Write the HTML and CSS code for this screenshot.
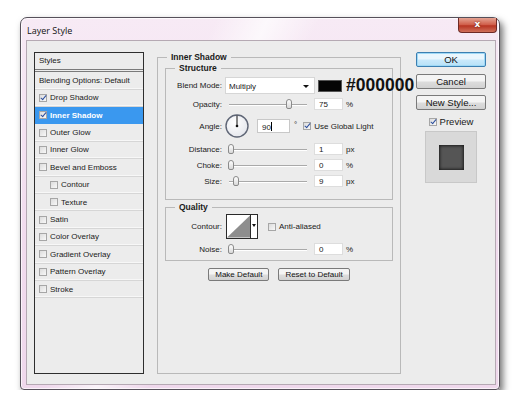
FILE: index.html
```html
<!DOCTYPE html>
<html lang="en">
<head>
  <meta charset="UTF-8">
  <title>Layer Style</title>
  <link rel="stylesheet" href="styles.css">
</head>
<body>
  <div class="desktop">
    <div class="window">
      <div class="titlebar">
        <span class="title">Layer Style</span>
        <span class="close">x</span>
      </div>

      <div class="client">
        <ul class="style-list">
          <li class="head">Styles</li>
          <li class="blend">Blending Options: Default</li>
          <li><span class="cb on"></span>Drop Shadow</li>
          <li class="selected"><span class="cb on"></span>Inner Shadow</li>
          <li><span class="cb"></span>Outer Glow</li>
          <li><span class="cb"></span>Inner Glow</li>
          <li><span class="cb"></span>Bevel and Emboss</li>
          <li class="sub-item"><span class="cb"></span>Contour</li>
          <li class="sub-item"><span class="cb"></span>Texture</li>
          <li><span class="cb"></span>Satin</li>
          <li><span class="cb"></span>Color Overlay</li>
          <li><span class="cb"></span>Gradient Overlay</li>
          <li><span class="cb"></span>Pattern Overlay</li>
          <li><span class="cb"></span>Stroke</li>
          <li class="filler"></li>
        </ul>

        <fieldset class="group">
          <legend>Inner Shadow</legend>

          <fieldset class="sub structure">
            <legend>Structure</legend>

            <div class="row">
              <span class="lbl">Blend Mode:</span>
              <div class="select">Multiply<span class="arrow"></span></div>
              <span class="swatch"></span>
              <span class="hex">#000000</span>
            </div>

            <div class="row tight">
              <span class="lbl">Opacity:</span>
              <div class="slider"><span class="thumb" style="left: 74%"></span></div>
              <span class="num">75</span>
              <span class="unit">%</span>
            </div>

            <div class="row angle">
              <span class="lbl">Angle:</span>
              <svg class="dial" width="24" height="24" viewBox="0 0 24 24">
                <defs>
                  <radialGradient id="dialFill" cx="40%" cy="35%" r="70%">
                    <stop offset="0" stop-color="#ffffff"/>
                    <stop offset="1" stop-color="#e4e6ec"/>
                  </radialGradient>
                </defs>
                <circle cx="12" cy="12" r="11" fill="url(#dialFill)" stroke="#5f6676" stroke-width="1.4"/>
                <line x1="12" y1="12" x2="12" y2="1.5" stroke="#111" stroke-width="1"/>
                <circle cx="12" cy="12" r="1.3" fill="#111"/>
              </svg>
              <span class="num wide">90<i class="caret"></i></span>
              <span class="deg">°</span>
              <span class="cb on"></span>
              <span class="cb-text">Use Global Light</span>
            </div>

            <div class="row spaced">
              <span class="lbl">Distance:</span>
              <div class="slider"><span class="thumb" style="left: 0%"></span></div>
              <span class="num">1</span>
              <span class="unit">px</span>
            </div>

            <div class="row">
              <span class="lbl">Choke:</span>
              <div class="slider"><span class="thumb" style="left: 0%"></span></div>
              <span class="num">0</span>
              <span class="unit">%</span>
            </div>

            <div class="row">
              <span class="lbl">Size:</span>
              <div class="slider"><span class="thumb" style="left: 6%"></span></div>
              <span class="num">9</span>
              <span class="unit">px</span>
            </div>
          </fieldset>

          <fieldset class="sub quality">
            <legend>Quality</legend>

            <div class="row contour-row">
              <span class="lbl">Contour:</span>
              <div class="contour">
                <svg width="24" height="23" viewBox="0 0 24 23">
                  <rect width="24" height="23" fill="#fff"/>
                  <polygon points="0,23 24,0 24,23" fill="#8e8e8e"/>
                </svg>
                <span class="arrow"></span>
              </div>
              <span class="cb"></span>
              <span class="cb-text">Anti-aliased</span>
            </div>

            <div class="row">
              <span class="lbl">Noise:</span>
              <div class="slider"><span class="thumb" style="left: 0%"></span></div>
              <span class="num">0</span>
              <span class="unit">%</span>
            </div>
          </fieldset>

          <div class="defaults">
            <button>Make Default</button>
            <button>Reset to Default</button>
          </div>
        </fieldset>

        <div class="actions">
          <button class="btn default">OK</button>
          <button class="btn">Cancel</button>
          <button class="btn">New Style...</button>
          <div class="preview-toggle"><span class="cb on"></span>Preview</div>
          <div class="preview"><span class="sample"></span></div>
        </div>
      </div>
    </div>
  </div>
</body>
</html>
```

FILE: styles.css
```css
* {
  box-sizing: border-box;
}

body {
  margin: 0;
  background: #ffffff;
  font-family: "Liberation Sans", Arial, sans-serif;
  color: #1a1a1a;
}

.desktop {
  padding: 17px 0 0 20px;
}

/* window frame */
.window {
  width: 480px;
  height: 373px;
  border: 1px solid #56505a;
  border-radius: 7px 7px 4px 4px;
  padding: 0 3px 4px 5px;
  display: flex;
  flex-direction: column;
  background:
    linear-gradient(115deg, rgba(255,255,255,0) 30%, rgba(255,255,255,0.7) 38%, rgba(255,255,255,0) 46%),
    linear-gradient(180deg, #f7eaf5, #f1dcee 60%, #efd8ec);
  box-shadow: 3px 4px 7px rgba(0, 0, 0, 0.55), inset 0 0 0 1px rgba(255, 255, 255, 0.7);
}

.titlebar {
  height: 22px;
  display: flex;
  align-items: flex-start;
  justify-content: space-between;
}

.title {
  font-family: "Open Sans", sans-serif;
  font-size: 9px;
  color: #111;
  margin: 6px 0 0 1px;
}

.close {
  width: 39px;
  height: 15px;
  margin-right: -1px;
  border: 1px solid #6e2a25;
  border-top: none;
  border-radius: 0 0 4px 4px;
  background: linear-gradient(180deg, #e5a493, #cf5b47 50%, #b73422 55%, #d0705a);
  color: #fff;
  font-family: "DejaVu Sans", sans-serif;
  font-weight: bold;
  font-size: 9px;
  line-height: 13px;
  text-align: center;
  text-shadow: 0 0 2px #5a1a12;
}

.client {
  flex: 1;
  display: flex;
  align-items: stretch;
  border: 1px solid #b5a9b3;
  background: #ececec;
  padding: 11px 0 10px 7px;
}

/* left styles list */
.style-list {
  list-style: none;
  margin: 0;
  padding: 0;
  width: 110px;
  flex: none;
  border: 1px solid #2e2e2e;
  display: flex;
  flex-direction: column;
  font-size: 8px;
}

.style-list li {
  height: 17.4px;
  display: flex;
  align-items: center;
  padding-left: 4px;
  white-space: nowrap;
  border-bottom: 1px solid #d6d6d6;
  box-shadow: inset 0 -1px #f7f7f7;
}

.style-list li.head {
  height: 19px;
  padding-bottom: 1px;
  border-bottom: 3px double #7a7a7a;
  box-shadow: none;
}

.style-list li.blend {
  height: 17.6px;
}

.style-list li.sub-item {
  padding-left: 15px;
}

.style-list li.selected {
  background: #3a98ef;
  color: #fff;
  font-weight: bold;
  border-bottom-color: #3a98ef;
  box-shadow: none;
}

.style-list li.filler {
  flex: 1;
  border: none;
  box-shadow: none;
}

/* checkboxes */
.cb {
  position: relative;
  width: 8px;
  height: 8px;
  flex: none;
  border: 1px solid #a6a6a6;
  background: linear-gradient(135deg, #dcdcdc, #f8f8f8);
  margin-right: 3px;
}

.cb.on::after {
  content: "";
  position: absolute;
  left: 2px;
  top: -1px;
  width: 2px;
  height: 5px;
  border-right: 1.5px solid #2c4f9e;
  border-bottom: 1.5px solid #2c4f9e;
  transform: rotate(40deg);
}

/* option groups */
.group {
  margin: 0 0 0 13px;
  padding: 0 7px 0 7px;
  width: 244px;
  min-width: 0;
  flex: none;
  border: 1px solid #b9b9b9;
  display: flex;
  flex-direction: column;
  font-size: 8px;
}

legend {
  font-weight: bold;
  font-size: 8.5px;
  padding: 0 4px;
  margin-left: 2px;
  line-height: 10px;
}

.sub {
  margin: 1px 0 0 0;
  padding: 0 0 12px 0;
  min-width: 0;
  border: 1px solid #b9b9b9;
  display: flex;
  flex-direction: column;
  gap: 4px;
}

.sub legend {
  margin-left: 9px;
}

.structure .row:first-of-type {
  margin-top: 2px;
}

.structure .row.tight {
  margin-top: -2px;
}

.structure .row.spaced {
  margin-top: 1px;
}

.quality {
  margin-top: 2px;
  padding-bottom: 5px;
  gap: 4px;
}

.quality .contour-row {
  margin-top: 2px;
}

.row {
  display: flex;
  align-items: center;
  min-height: 12px;
  white-space: nowrap;
}

.lbl {
  width: 56px;
  text-align: right;
  flex: none;
}

.select {
  position: relative;
  width: 90px;
  height: 17px;
  flex: none;
  margin-left: 3px;
  background: #fff;
  border: 1px solid #d6d6d6;
  padding: 4px 0 0 3px;
}

.select .arrow,
.contour .arrow {
  position: absolute;
  right: 5px;
  top: 7px;
  border-left: 3px solid transparent;
  border-right: 3px solid transparent;
  border-top: 3px solid #111;
}

.swatch {
  width: 24px;
  height: 12px;
  flex: none;
  margin-left: 3px;
  background: #050505;
  border: 1px solid #555;
}

.hex {
  margin-left: 4px;
  font-family: "Liberation Sans", sans-serif;
  font-weight: bold;
  font-size: 17.5px;
  color: #111;
}

.slider {
  position: relative;
  width: 78px;
  height: 1px;
  flex: none;
  margin-left: 7px;
  background: #a9a9a9;
  box-shadow: 0 1px #ffffff;
}

.thumb {
  position: absolute;
  top: -5px;
  width: 6px;
  height: 10px;
  margin-left: -1px;
  border: 1px solid #8a8a8a;
  border-radius: 3px 3px 2px 2px;
  background: linear-gradient(180deg, #ffffff, #d8d8d8);
}

.num {
  width: 29px;
  height: 12px;
  flex: none;
  margin-left: 7px;
  background: #fff;
  border: 1px solid #dddddd;
  padding: 1px 0 0 4px;
  line-height: 9px;
}

.num.wide {
  width: 33px;
  height: 14px;
  margin-left: 8px;
  padding-top: 2px;
  border-color: #c8c8c8;
}

.caret {
  display: inline-block;
  width: 1px;
  height: 9px;
  background: #000;
  vertical-align: -1px;
}

.unit {
  margin-left: 3px;
}

.angle .dial {
  margin-left: 3px;
  flex: none;
}

.deg {
  margin: -4px 6px 0 4px;
}

.contour {
  position: relative;
  width: 32px;
  height: 25px;
  flex: none;
  margin-left: 4px;
  margin-right: 10px;
  border: 1px solid #2a2a2a;
  background: #fff;
  display: flex;
}

.contour svg {
  border-right: 1px solid #2a2a2a;
}

.contour .arrow {
  right: 1px;
  top: 9px;
  border-width: 3px 2.5px 0 2.5px;
}

/* buttons */
.defaults {
  display: flex;
  justify-content: center;
  gap: 9px;
  margin-top: 7px;
}

button {
  font-family: "Liberation Sans", Arial, sans-serif;
  font-size: 8px;
  color: #111;
  height: 13px;
  padding: 0 6px;
  border: 1px solid #7a7a7a;
  border-radius: 2px;
  background: linear-gradient(180deg, #f4f4f4 45%, #dcdcdc 55%, #d2d2d2);
}

.actions {
  margin-left: 15px;
  width: 70px;
  flex: none;
  display: flex;
  flex-direction: column;
  align-items: center;
}

.btn {
  width: 70px;
  height: 15px;
  font-size: 9.5px;
  margin-bottom: 6px;
}

.btn.default {
  border-color: #3c7fb1;
  background: linear-gradient(180deg, #eaf6fd 45%, #c9e9fb 55%, #b7e1f8);
  box-shadow: inset 0 0 0 1px #9fd9f6;
  margin-bottom: 7px;
}

.preview-toggle {
  display: flex;
  align-items: center;
  font-size: 9.5px;
  margin: 0 0 4px 0;
}

.preview {
  width: 52px;
  height: 52px;
  background: #d9d9d9;
  border: 1px solid #c8c8c8;
  display: flex;
  align-items: center;
  justify-content: center;
}

.sample {
  width: 25px;
  height: 25px;
  background: #555555;
  box-shadow: inset 0 0 3px 1px #1e1e1e;
}
```
